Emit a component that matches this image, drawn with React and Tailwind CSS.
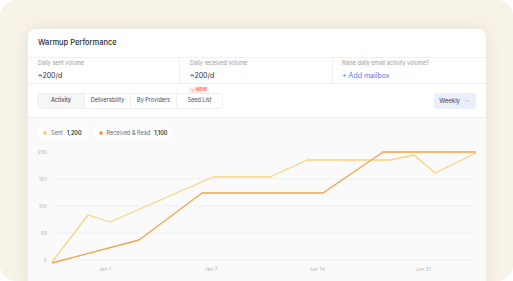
import { ChevronDown, Check } from 'lucide-react';

const SENT = [
  [24, 116], [60, 69], [82, 76], [185, 31], [242, 31], [279, 14],
  [362, 14], [386, 9], [407, 27], [448, 7],
];
const RECEIVED = [
  [24, 117], [111, 94], [174, 47], [295, 47], [355, 6], [448, 6],
];
const Y_TICKS = [
  { label: '200', y: 6 },
  { label: '150', y: 33 },
  { label: '100', y: 60 },
  { label: '50', y: 87 },
  { label: '0', y: 114 },
];
const X_TICKS = [
  { label: 'Jan 1', x: 77 },
  { label: 'Jan 7', x: 183 },
  { label: 'Jun 14', x: 289 },
  { label: 'Jun 21', x: 395 },
];
const TABS = ['Activity', 'Deliverability', 'By Providers', 'Seed List'];

const toPoints = (pts) => pts.map(([x, y]) => `${x},${y}`).join(' ');

function Chart() {
  return (
    <svg width="458" height="135" viewBox="0 0 458 135" className="block">
      {Y_TICKS.map((t) => (
        <g key={t.label}>
          <line x1="24" x2="448" y1={t.y} y2={t.y} stroke="#eeeeee" strokeWidth="0.8" />
          <text
            x="19"
            y={t.y + 2}
            textAnchor="end"
            fontSize="5"
            fill="#b5b5b5"
            fontFamily="Inter, sans-serif"
          >
            {t.label}
          </text>
        </g>
      ))}
      {X_TICKS.map((t) => (
        <text
          key={t.label}
          x={t.x}
          y="125"
          textAnchor="middle"
          fontSize="5"
          fill="#b5b5b5"
          fontFamily="Inter, sans-serif"
        >
          {t.label}
        </text>
      ))}
      <polyline points={toPoints(SENT)} fill="none" stroke="#fcd27e" strokeWidth="1.3" strokeLinejoin="round" />
      <polyline points={toPoints(RECEIVED)} fill="none" stroke="#f4a448" strokeWidth="1.3" strokeLinejoin="round" />
    </svg>
  );
}

export default function App() {
  return (
    <div className="h-[281px] w-[513px] overflow-hidden bg-white font-['Inter',sans-serif]">
      <div className="h-full rounded-[16px] bg-[#f8f3e9] pl-[28px] pt-[29px]">
        <div className="w-[458px] h-[260px] overflow-hidden rounded-t-[8px] bg-white shadow-[0_0_18px_rgba(140,115,70,0.14)]">
          <div className="flex h-[29px] items-center border-b border-[#f0f0f0] px-[10px]">
            <span className="text-[7.5px] font-medium text-[#2d2d35]">Warmup Performance</span>
          </div>

          <div className="flex h-[26px] border-b border-[#efefef]">
            <div className="flex w-[152px] flex-col justify-center gap-[4px] border-r border-[#efefef] px-[10px]">
              <span className="text-[5.5px] text-[#9a9a9a]">Daily sent volume</span>
              <span className="text-[7px] text-[#2d2d35]">~200/d</span>
            </div>
            <div className="flex w-[153px] flex-col justify-center gap-[4px] border-r border-[#efefef] px-[10px]">
              <span className="text-[5.5px] text-[#9a9a9a]">Daily received volume</span>
              <span className="text-[7px] text-[#2d2d35]">~200/d</span>
            </div>
            <div className="flex flex-1 flex-col justify-center gap-[4px] px-[9px]">
              <span className="text-[5.5px] text-[#9a9a9a]">Raise daily email activity volume?</span>
              <span className="text-[7px] text-[#4a82e6]">+ Add mailbox</span>
            </div>
          </div>

          <div className="flex h-[34px] items-center justify-between border-b border-[#efefef] pl-[9px] pr-[10px]">
            <div className="flex h-[16px] rounded-[4px] border border-[#efefef]">
              {TABS.map((tab, i) => (
                <div
                  key={tab}
                  className={
                    'relative flex w-[46px] items-center justify-center text-[5.5px] text-[#4a4a55] ' +
                    (i === 0 ? 'rounded-l-[4px] bg-[#f6f6f6] font-medium' : 'border-l border-[#efefef]')
                  }
                >
                  {tab}
                  {tab === 'Seed List' && (
                    <span className="absolute left-[12px] top-[-7px] flex items-center gap-[1px] rounded-[2px] bg-[#fdeceb] px-[2px] py-[0.5px] text-[4.5px] font-semibold text-[#ef6b5b]">
                      <Check size={4} strokeWidth={3} />
                      NEW
                    </span>
                  )}
                </div>
              ))}
            </div>
            <div className="flex h-[16px] items-center gap-[4px] rounded-[3px] bg-[#e9f0fb] pl-[5px] pr-[6px] text-[6px] text-[#3d3d48]">
              Weekly
              <ChevronDown size={6} strokeWidth={1.5} className="text-[#8a8a98]" />
            </div>
          </div>

          <div className="h-[200px] bg-[#fafafa] pt-[9px]">
            <div className="flex gap-[5px] pl-[9px]">
              <div className="flex h-[12px] items-center gap-[4px] rounded-full bg-white px-[6px] text-[5.5px]">
                <span className="h-[4px] w-[4px] rounded-full bg-[#fcd27e]" />
                <span className="text-[#6a6a75]">Sent</span>
                <span className="font-semibold text-[#2d2d35]">1,200</span>
              </div>
              <div className="flex h-[12px] items-center gap-[4px] rounded-full bg-white px-[6px] text-[5.5px]">
                <span className="h-[4px] w-[4px] rounded-full bg-[#f4a448]" />
                <span className="text-[#6a6a75]">Received &amp; Read</span>
                <span className="font-semibold text-[#2d2d35]">1,100</span>
              </div>
            </div>
            <div className="mt-[7px]">
              <Chart />
            </div>
          </div>
        </div>
      </div>
    </div>
  );
}
